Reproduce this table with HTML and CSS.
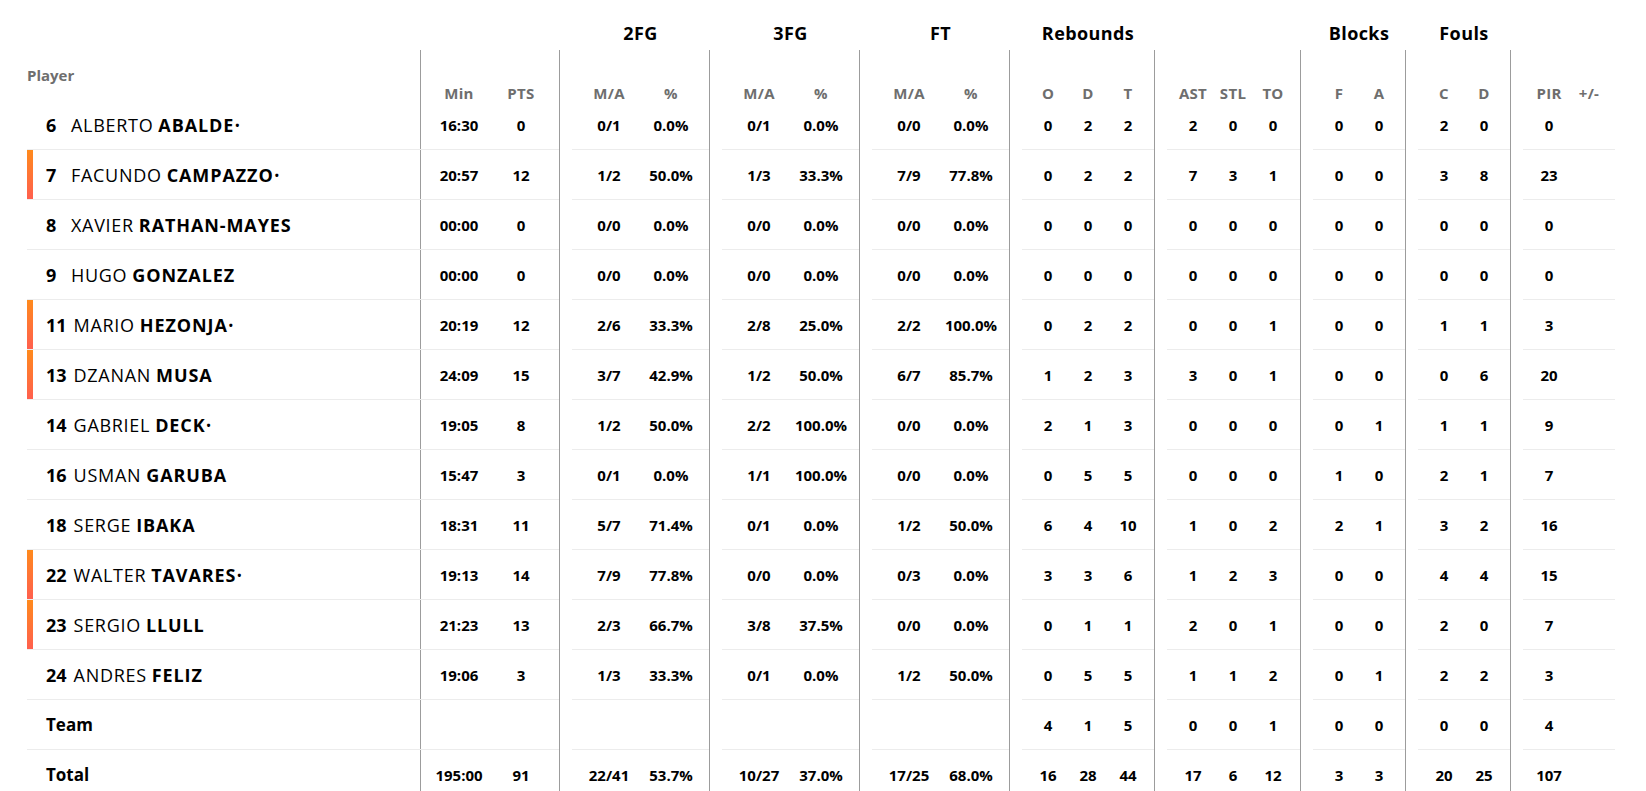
FILE: index.html
```html
<!DOCTYPE html>
<html>
<head>
<meta charset="utf-8">
<link rel="stylesheet" href="styles.css">
</head>
<body>
<div class="table">
  <div class="row row-title">
    <div class="main"></div>
    <div class="grp gs"><div class="in"><span class="title">2FG</span></div></div>
    <div class="grp gs"><div class="in"><span class="title">3FG</span></div></div>
    <div class="grp gs"><div class="in"><span class="title">FT</span></div></div>
    <div class="grp gr"><div class="in"><span class="title">Rebounds</span></div></div>
    <div class="grp ga"><div class="in"></div></div>
    <div class="grp g2"><div class="in"><span class="title">Blocks</span></div></div>
    <div class="grp g2"><div class="in"><span class="title">Fouls</span></div></div>
    <div class="grp g2"><div class="in"></div></div>
  </div>

  <div class="row row-sub">
    <div class="main"><div class="player"><span class="plabel">Player</span></div><div class="mp"><span class="c w">Min</span><span class="c w">PTS</span></div></div>
    <div class="grp gs"><div class="in"><span class="c w">M/A</span><span class="c w">%</span></div></div>
    <div class="grp gs"><div class="in"><span class="c w">M/A</span><span class="c w">%</span></div></div>
    <div class="grp gs"><div class="in"><span class="c w">M/A</span><span class="c w">%</span></div></div>
    <div class="grp gr"><div class="in"><span class="c">O</span><span class="c">D</span><span class="c">T</span></div></div>
    <div class="grp ga"><div class="in"><span class="c">AST</span><span class="c">STL</span><span class="c">TO</span></div></div>
    <div class="grp g2"><div class="in"><span class="c">F</span><span class="c">A</span></div></div>
    <div class="grp g2"><div class="in"><span class="c">C</span><span class="c">D</span></div></div>
    <div class="grp g2"><div class="in"><span class="c">PIR</span><span class="c">+/-</span></div></div>
  </div>

  <div class="row">
    <div class="main"><div class="player"><span class="bar"></span><span class="num">6</span><span class="fn">ALBERTO</span><span class="ln">ABALDE</span><span class="star">•</span></div><div class="mp"><span class="c w">16:30</span><span class="c w">0</span></div></div>
    <div class="grp gs"><div class="in"><span class="c w">0/1</span><span class="c w">0.0%</span></div></div>
    <div class="grp gs"><div class="in"><span class="c w">0/1</span><span class="c w">0.0%</span></div></div>
    <div class="grp gs"><div class="in"><span class="c w">0/0</span><span class="c w">0.0%</span></div></div>
    <div class="grp gr"><div class="in"><span class="c">0</span><span class="c">2</span><span class="c">2</span></div></div>
    <div class="grp ga"><div class="in"><span class="c">2</span><span class="c">0</span><span class="c">0</span></div></div>
    <div class="grp g2"><div class="in"><span class="c">0</span><span class="c">0</span></div></div>
    <div class="grp g2"><div class="in"><span class="c">2</span><span class="c">0</span></div></div>
    <div class="grp g2"><div class="in"><span class="c">0</span><span class="c"></span></div></div>
  </div>

  <div class="row">
    <div class="main"><div class="player"><span class="bar on"></span><span class="num">7</span><span class="fn">FACUNDO</span><span class="ln">CAMPAZZO</span><span class="star">•</span></div><div class="mp"><span class="c w">20:57</span><span class="c w">12</span></div></div>
    <div class="grp gs"><div class="in"><span class="c w">1/2</span><span class="c w">50.0%</span></div></div>
    <div class="grp gs"><div class="in"><span class="c w">1/3</span><span class="c w">33.3%</span></div></div>
    <div class="grp gs"><div class="in"><span class="c w">7/9</span><span class="c w">77.8%</span></div></div>
    <div class="grp gr"><div class="in"><span class="c">0</span><span class="c">2</span><span class="c">2</span></div></div>
    <div class="grp ga"><div class="in"><span class="c">7</span><span class="c">3</span><span class="c">1</span></div></div>
    <div class="grp g2"><div class="in"><span class="c">0</span><span class="c">0</span></div></div>
    <div class="grp g2"><div class="in"><span class="c">3</span><span class="c">8</span></div></div>
    <div class="grp g2"><div class="in"><span class="c">23</span><span class="c"></span></div></div>
  </div>

  <div class="row">
    <div class="main"><div class="player"><span class="bar"></span><span class="num">8</span><span class="fn">XAVIER</span><span class="ln">RATHAN-MAYES</span></div><div class="mp"><span class="c w">00:00</span><span class="c w">0</span></div></div>
    <div class="grp gs"><div class="in"><span class="c w">0/0</span><span class="c w">0.0%</span></div></div>
    <div class="grp gs"><div class="in"><span class="c w">0/0</span><span class="c w">0.0%</span></div></div>
    <div class="grp gs"><div class="in"><span class="c w">0/0</span><span class="c w">0.0%</span></div></div>
    <div class="grp gr"><div class="in"><span class="c">0</span><span class="c">0</span><span class="c">0</span></div></div>
    <div class="grp ga"><div class="in"><span class="c">0</span><span class="c">0</span><span class="c">0</span></div></div>
    <div class="grp g2"><div class="in"><span class="c">0</span><span class="c">0</span></div></div>
    <div class="grp g2"><div class="in"><span class="c">0</span><span class="c">0</span></div></div>
    <div class="grp g2"><div class="in"><span class="c">0</span><span class="c"></span></div></div>
  </div>

  <div class="row">
    <div class="main"><div class="player"><span class="bar"></span><span class="num">9</span><span class="fn">HUGO</span><span class="ln">GONZALEZ</span></div><div class="mp"><span class="c w">00:00</span><span class="c w">0</span></div></div>
    <div class="grp gs"><div class="in"><span class="c w">0/0</span><span class="c w">0.0%</span></div></div>
    <div class="grp gs"><div class="in"><span class="c w">0/0</span><span class="c w">0.0%</span></div></div>
    <div class="grp gs"><div class="in"><span class="c w">0/0</span><span class="c w">0.0%</span></div></div>
    <div class="grp gr"><div class="in"><span class="c">0</span><span class="c">0</span><span class="c">0</span></div></div>
    <div class="grp ga"><div class="in"><span class="c">0</span><span class="c">0</span><span class="c">0</span></div></div>
    <div class="grp g2"><div class="in"><span class="c">0</span><span class="c">0</span></div></div>
    <div class="grp g2"><div class="in"><span class="c">0</span><span class="c">0</span></div></div>
    <div class="grp g2"><div class="in"><span class="c">0</span><span class="c"></span></div></div>
  </div>

  <div class="row">
    <div class="main"><div class="player"><span class="bar on"></span><span class="num">11</span><span class="fn">MARIO</span><span class="ln">HEZONJA</span><span class="star">•</span></div><div class="mp"><span class="c w">20:19</span><span class="c w">12</span></div></div>
    <div class="grp gs"><div class="in"><span class="c w">2/6</span><span class="c w">33.3%</span></div></div>
    <div class="grp gs"><div class="in"><span class="c w">2/8</span><span class="c w">25.0%</span></div></div>
    <div class="grp gs"><div class="in"><span class="c w">2/2</span><span class="c w">100.0%</span></div></div>
    <div class="grp gr"><div class="in"><span class="c">0</span><span class="c">2</span><span class="c">2</span></div></div>
    <div class="grp ga"><div class="in"><span class="c">0</span><span class="c">0</span><span class="c">1</span></div></div>
    <div class="grp g2"><div class="in"><span class="c">0</span><span class="c">0</span></div></div>
    <div class="grp g2"><div class="in"><span class="c">1</span><span class="c">1</span></div></div>
    <div class="grp g2"><div class="in"><span class="c">3</span><span class="c"></span></div></div>
  </div>

  <div class="row">
    <div class="main"><div class="player"><span class="bar on"></span><span class="num">13</span><span class="fn">DZANAN</span><span class="ln">MUSA</span></div><div class="mp"><span class="c w">24:09</span><span class="c w">15</span></div></div>
    <div class="grp gs"><div class="in"><span class="c w">3/7</span><span class="c w">42.9%</span></div></div>
    <div class="grp gs"><div class="in"><span class="c w">1/2</span><span class="c w">50.0%</span></div></div>
    <div class="grp gs"><div class="in"><span class="c w">6/7</span><span class="c w">85.7%</span></div></div>
    <div class="grp gr"><div class="in"><span class="c">1</span><span class="c">2</span><span class="c">3</span></div></div>
    <div class="grp ga"><div class="in"><span class="c">3</span><span class="c">0</span><span class="c">1</span></div></div>
    <div class="grp g2"><div class="in"><span class="c">0</span><span class="c">0</span></div></div>
    <div class="grp g2"><div class="in"><span class="c">0</span><span class="c">6</span></div></div>
    <div class="grp g2"><div class="in"><span class="c">20</span><span class="c"></span></div></div>
  </div>

  <div class="row">
    <div class="main"><div class="player"><span class="bar"></span><span class="num">14</span><span class="fn">GABRIEL</span><span class="ln">DECK</span><span class="star">•</span></div><div class="mp"><span class="c w">19:05</span><span class="c w">8</span></div></div>
    <div class="grp gs"><div class="in"><span class="c w">1/2</span><span class="c w">50.0%</span></div></div>
    <div class="grp gs"><div class="in"><span class="c w">2/2</span><span class="c w">100.0%</span></div></div>
    <div class="grp gs"><div class="in"><span class="c w">0/0</span><span class="c w">0.0%</span></div></div>
    <div class="grp gr"><div class="in"><span class="c">2</span><span class="c">1</span><span class="c">3</span></div></div>
    <div class="grp ga"><div class="in"><span class="c">0</span><span class="c">0</span><span class="c">0</span></div></div>
    <div class="grp g2"><div class="in"><span class="c">0</span><span class="c">1</span></div></div>
    <div class="grp g2"><div class="in"><span class="c">1</span><span class="c">1</span></div></div>
    <div class="grp g2"><div class="in"><span class="c">9</span><span class="c"></span></div></div>
  </div>

  <div class="row">
    <div class="main"><div class="player"><span class="bar"></span><span class="num">16</span><span class="fn">USMAN</span><span class="ln">GARUBA</span></div><div class="mp"><span class="c w">15:47</span><span class="c w">3</span></div></div>
    <div class="grp gs"><div class="in"><span class="c w">0/1</span><span class="c w">0.0%</span></div></div>
    <div class="grp gs"><div class="in"><span class="c w">1/1</span><span class="c w">100.0%</span></div></div>
    <div class="grp gs"><div class="in"><span class="c w">0/0</span><span class="c w">0.0%</span></div></div>
    <div class="grp gr"><div class="in"><span class="c">0</span><span class="c">5</span><span class="c">5</span></div></div>
    <div class="grp ga"><div class="in"><span class="c">0</span><span class="c">0</span><span class="c">0</span></div></div>
    <div class="grp g2"><div class="in"><span class="c">1</span><span class="c">0</span></div></div>
    <div class="grp g2"><div class="in"><span class="c">2</span><span class="c">1</span></div></div>
    <div class="grp g2"><div class="in"><span class="c">7</span><span class="c"></span></div></div>
  </div>

  <div class="row">
    <div class="main"><div class="player"><span class="bar"></span><span class="num">18</span><span class="fn">SERGE</span><span class="ln">IBAKA</span></div><div class="mp"><span class="c w">18:31</span><span class="c w">11</span></div></div>
    <div class="grp gs"><div class="in"><span class="c w">5/7</span><span class="c w">71.4%</span></div></div>
    <div class="grp gs"><div class="in"><span class="c w">0/1</span><span class="c w">0.0%</span></div></div>
    <div class="grp gs"><div class="in"><span class="c w">1/2</span><span class="c w">50.0%</span></div></div>
    <div class="grp gr"><div class="in"><span class="c">6</span><span class="c">4</span><span class="c">10</span></div></div>
    <div class="grp ga"><div class="in"><span class="c">1</span><span class="c">0</span><span class="c">2</span></div></div>
    <div class="grp g2"><div class="in"><span class="c">2</span><span class="c">1</span></div></div>
    <div class="grp g2"><div class="in"><span class="c">3</span><span class="c">2</span></div></div>
    <div class="grp g2"><div class="in"><span class="c">16</span><span class="c"></span></div></div>
  </div>

  <div class="row">
    <div class="main"><div class="player"><span class="bar on"></span><span class="num">22</span><span class="fn">WALTER</span><span class="ln">TAVARES</span><span class="star">•</span></div><div class="mp"><span class="c w">19:13</span><span class="c w">14</span></div></div>
    <div class="grp gs"><div class="in"><span class="c w">7/9</span><span class="c w">77.8%</span></div></div>
    <div class="grp gs"><div class="in"><span class="c w">0/0</span><span class="c w">0.0%</span></div></div>
    <div class="grp gs"><div class="in"><span class="c w">0/3</span><span class="c w">0.0%</span></div></div>
    <div class="grp gr"><div class="in"><span class="c">3</span><span class="c">3</span><span class="c">6</span></div></div>
    <div class="grp ga"><div class="in"><span class="c">1</span><span class="c">2</span><span class="c">3</span></div></div>
    <div class="grp g2"><div class="in"><span class="c">0</span><span class="c">0</span></div></div>
    <div class="grp g2"><div class="in"><span class="c">4</span><span class="c">4</span></div></div>
    <div class="grp g2"><div class="in"><span class="c">15</span><span class="c"></span></div></div>
  </div>

  <div class="row">
    <div class="main"><div class="player"><span class="bar on"></span><span class="num">23</span><span class="fn">SERGIO</span><span class="ln">LLULL</span></div><div class="mp"><span class="c w">21:23</span><span class="c w">13</span></div></div>
    <div class="grp gs"><div class="in"><span class="c w">2/3</span><span class="c w">66.7%</span></div></div>
    <div class="grp gs"><div class="in"><span class="c w">3/8</span><span class="c w">37.5%</span></div></div>
    <div class="grp gs"><div class="in"><span class="c w">0/0</span><span class="c w">0.0%</span></div></div>
    <div class="grp gr"><div class="in"><span class="c">0</span><span class="c">1</span><span class="c">1</span></div></div>
    <div class="grp ga"><div class="in"><span class="c">2</span><span class="c">0</span><span class="c">1</span></div></div>
    <div class="grp g2"><div class="in"><span class="c">0</span><span class="c">0</span></div></div>
    <div class="grp g2"><div class="in"><span class="c">2</span><span class="c">0</span></div></div>
    <div class="grp g2"><div class="in"><span class="c">7</span><span class="c"></span></div></div>
  </div>

  <div class="row">
    <div class="main"><div class="player"><span class="bar"></span><span class="num">24</span><span class="fn">ANDRES</span><span class="ln">FELIZ</span></div><div class="mp"><span class="c w">19:06</span><span class="c w">3</span></div></div>
    <div class="grp gs"><div class="in"><span class="c w">1/3</span><span class="c w">33.3%</span></div></div>
    <div class="grp gs"><div class="in"><span class="c w">0/1</span><span class="c w">0.0%</span></div></div>
    <div class="grp gs"><div class="in"><span class="c w">1/2</span><span class="c w">50.0%</span></div></div>
    <div class="grp gr"><div class="in"><span class="c">0</span><span class="c">5</span><span class="c">5</span></div></div>
    <div class="grp ga"><div class="in"><span class="c">1</span><span class="c">1</span><span class="c">2</span></div></div>
    <div class="grp g2"><div class="in"><span class="c">0</span><span class="c">1</span></div></div>
    <div class="grp g2"><div class="in"><span class="c">2</span><span class="c">2</span></div></div>
    <div class="grp g2"><div class="in"><span class="c">3</span><span class="c"></span></div></div>
  </div>

  <div class="row">
    <div class="main"><div class="player"><span class="bar"></span><span class="label">Team</span></div><div class="mp"><span class="c w"></span><span class="c w"></span></div></div>
    <div class="grp gs"><div class="in"></div></div>
    <div class="grp gs"><div class="in"></div></div>
    <div class="grp gs"><div class="in"></div></div>
    <div class="grp gr"><div class="in"><span class="c">4</span><span class="c">1</span><span class="c">5</span></div></div>
    <div class="grp ga"><div class="in"><span class="c">0</span><span class="c">0</span><span class="c">1</span></div></div>
    <div class="grp g2"><div class="in"><span class="c">0</span><span class="c">0</span></div></div>
    <div class="grp g2"><div class="in"><span class="c">0</span><span class="c">0</span></div></div>
    <div class="grp g2"><div class="in"><span class="c">4</span><span class="c"></span></div></div>
  </div>

  <div class="row">
    <div class="main"><div class="player"><span class="bar"></span><span class="label">Total</span></div><div class="mp"><span class="c w">195:00</span><span class="c w">91</span></div></div>
    <div class="grp gs"><div class="in"><span class="c w">22/41</span><span class="c w">53.7%</span></div></div>
    <div class="grp gs"><div class="in"><span class="c w">10/27</span><span class="c w">37.0%</span></div></div>
    <div class="grp gs"><div class="in"><span class="c w">17/25</span><span class="c w">68.0%</span></div></div>
    <div class="grp gr"><div class="in"><span class="c">16</span><span class="c">28</span><span class="c">44</span></div></div>
    <div class="grp ga"><div class="in"><span class="c">17</span><span class="c">6</span><span class="c">12</span></div></div>
    <div class="grp g2"><div class="in"><span class="c">3</span><span class="c">3</span></div></div>
    <div class="grp g2"><div class="in"><span class="c">20</span><span class="c">25</span></div></div>
    <div class="grp g2"><div class="in"><span class="c">107</span><span class="c"></span></div></div>
  </div>
</div>
</body>
</html>
```

FILE: styles.css
```css
* { box-sizing: border-box; }

body {
  margin: 0;
  background: #fff;
  color: #000;
  font-family: "Open Sans", "Noto Sans", sans-serif;
}

.table {
  padding-left: 27px;
}

.row {
  display: flex;
  height: 50px;
}

.main {
  display: flex;
  width: 532px;
  border-bottom: 1px solid #ececec;
}

.player {
  width: 393px;
  display: flex;
  align-items: center;
  font-size: 18px;
}

.bar {
  width: 6px;
  align-self: stretch;
  margin-right: 13px;
}

.bar.on {
  background: linear-gradient(180deg, #ff8a1c 0%, #ff5f4e 100%);
}

.num {
  min-width: 18px;
  margin-right: 7px;
  font-weight: 700;
}

.fn {
  font-weight: 400;
  letter-spacing: 0.7px;
  margin-right: 5px;
}

.ln {
  font-weight: 700;
  letter-spacing: 0.9px;
}

.star {
  font-size: 11px;
  font-weight: 700;
  margin-left: 1px;
}

.label {
  font-weight: 700;
  font-size: 17px;
}

.mp {
  display: flex;
  align-items: center;
  width: 139px;
  padding: 0 7px;
  border-left: 1px solid #9c9c9c;
}

.grp {
  display: flex;
  padding-left: 12px;
  border-left: 1px solid #9c9c9c;
}

.gs { width: 150px; }
.gr { width: 145px; }
.ga { width: 146px; }
.g2 { width: 105px; }

.in {
  flex: 1;
  display: flex;
  align-items: center;
  padding-left: 6px;
  border-bottom: 1px solid #ececec;
}

.c {
  width: 40px;
  flex: none;
  text-align: center;
  font-size: 15px;
  font-weight: 700;
}

.c.w {
  width: 62px;
}

/* group title row */
.row-title .main,
.row-title .in {
  border-bottom: none;
}

.row-title .grp {
  border-left-color: transparent;
}

.row-title .in {
  justify-content: center;
  align-items: flex-start;
  padding: 21px 0 0;
}

.title {
  font-size: 18px;
  font-weight: 700;
  letter-spacing: 0.4px;
  line-height: 24px;
}

/* sub header row */
.row-sub .main,
.row-sub .in {
  border-bottom: none;
}

.row-sub .player,
.row-sub .mp,
.row-sub .in {
  align-items: flex-start;
}

.row-sub .c {
  color: #6e6e6e;
  letter-spacing: 0.3px;
  padding-top: 33px;
  line-height: 20px;
}

.plabel {
  color: #6e6e6e;
  font-size: 15px;
  font-weight: 700;
  line-height: 20px;
  padding-top: 15px;
}
```
